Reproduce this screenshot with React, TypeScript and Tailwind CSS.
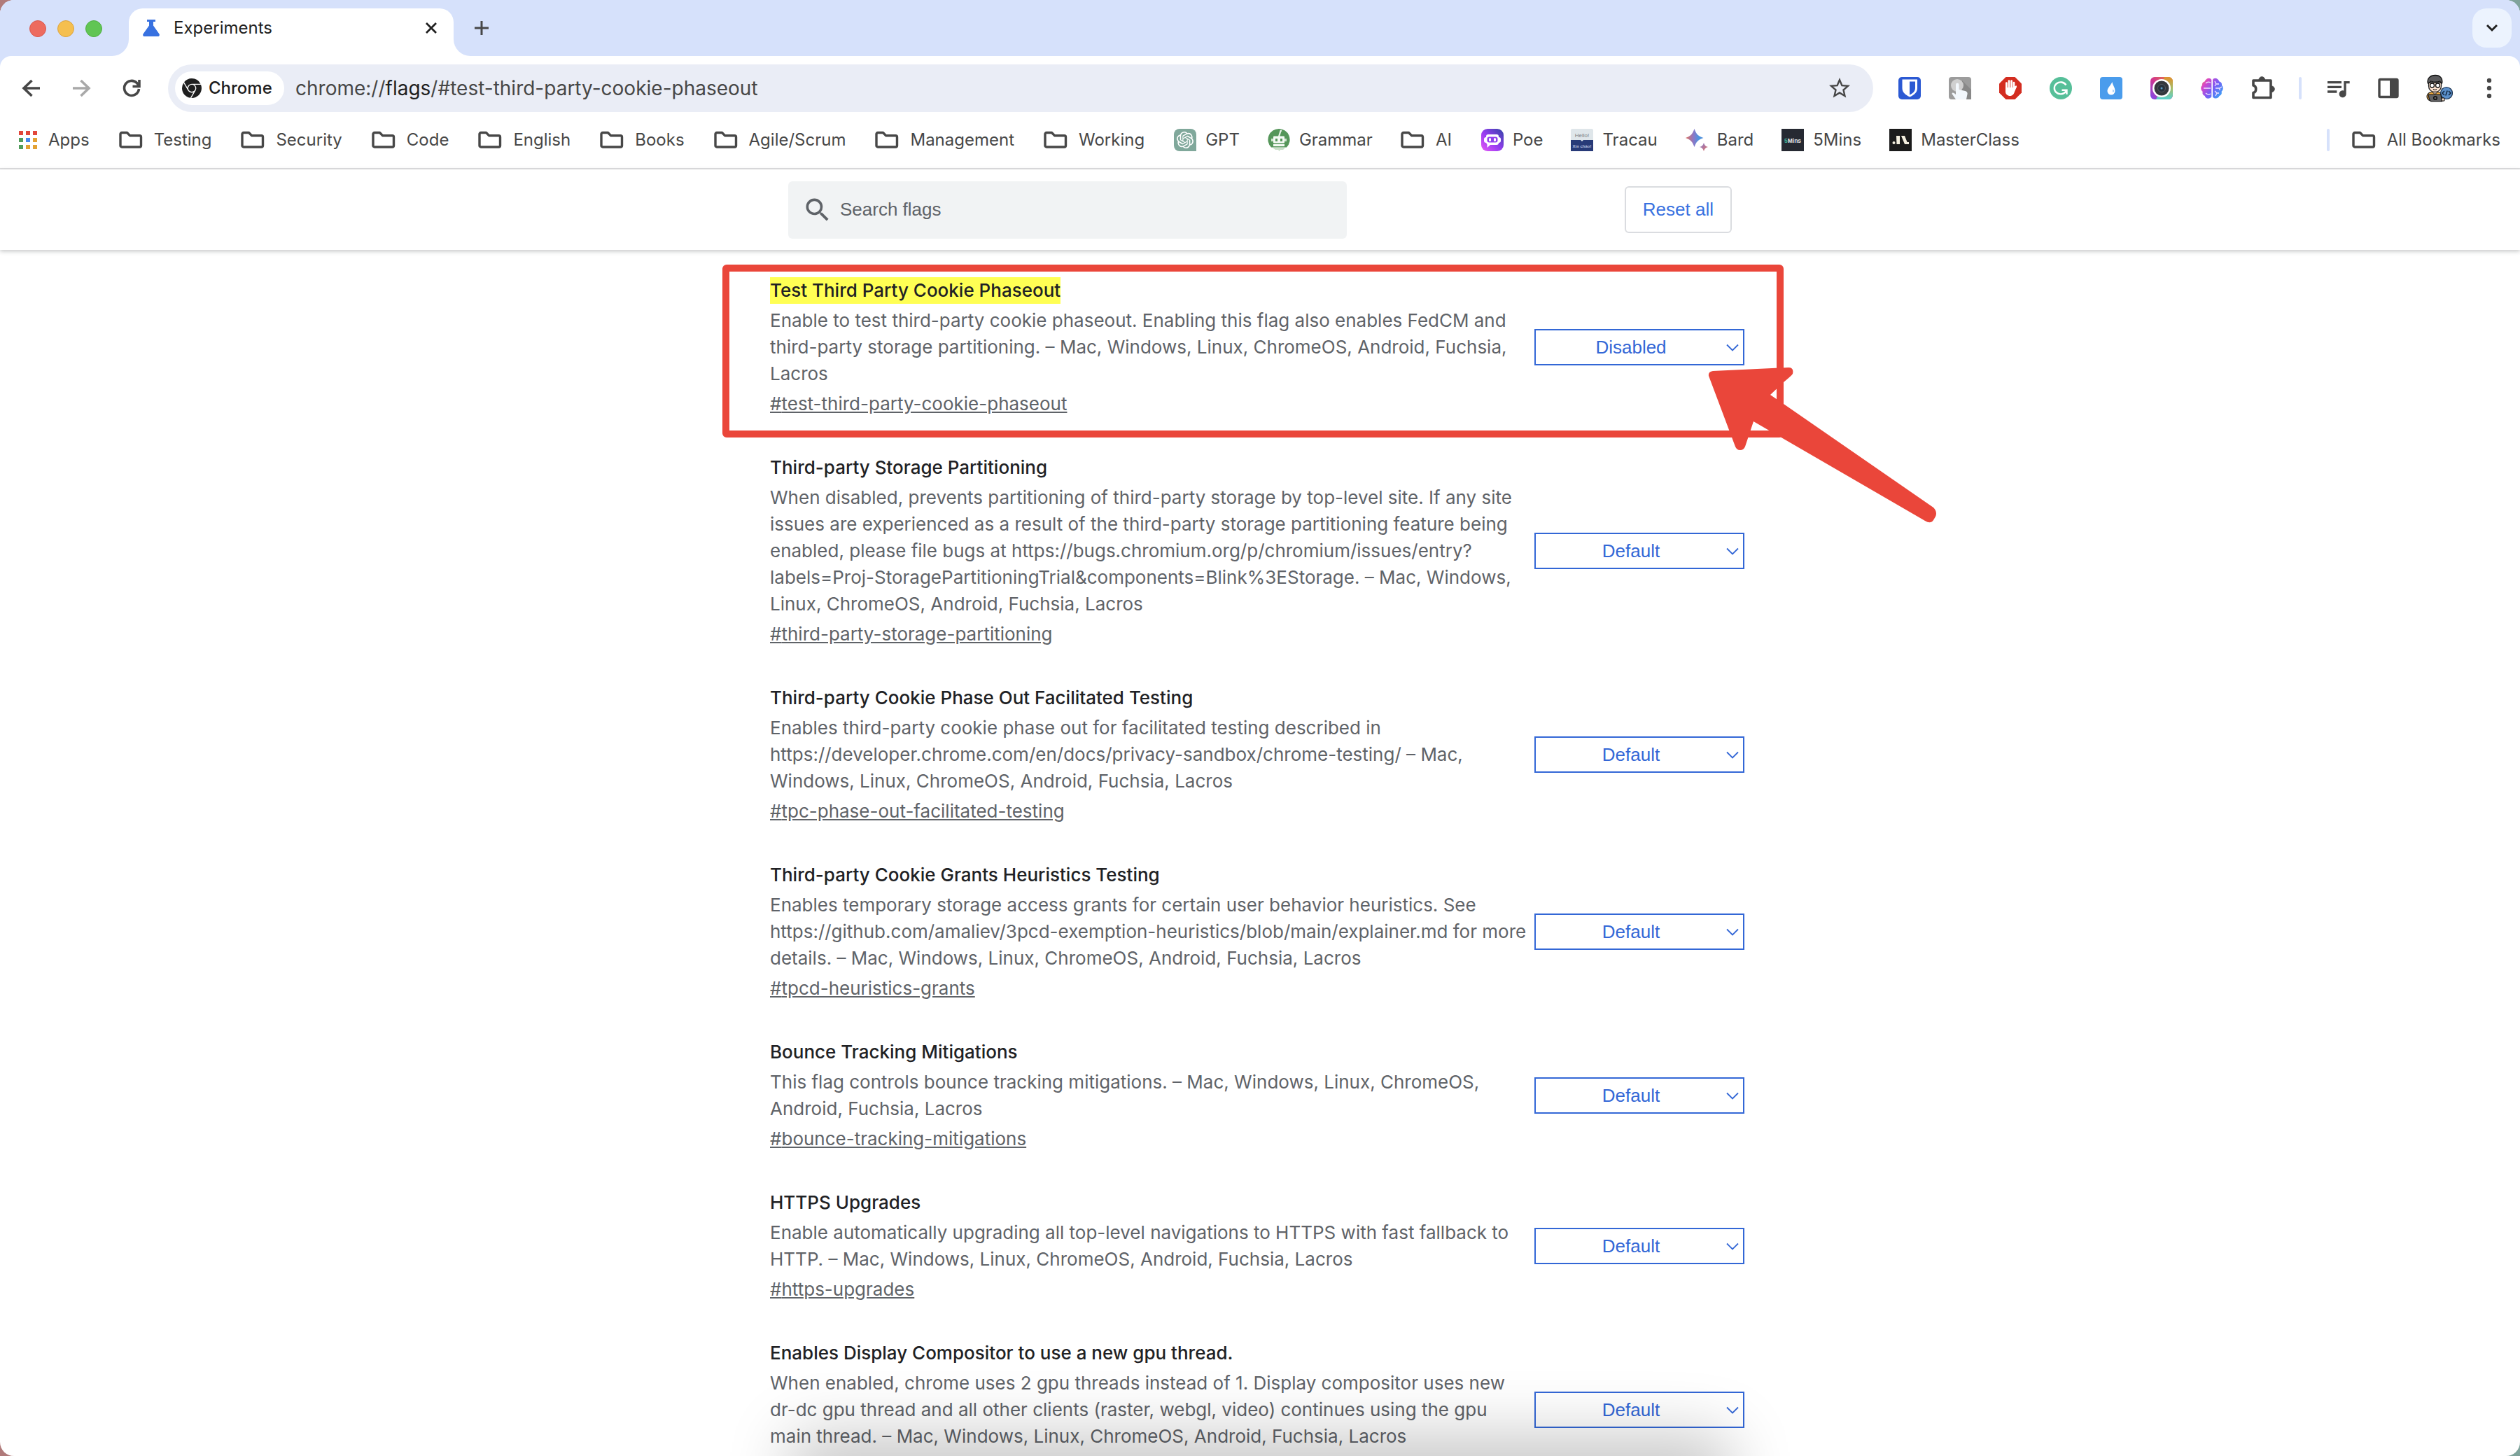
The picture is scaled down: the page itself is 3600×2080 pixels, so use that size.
import React from "react";
import { MdQueueMusic, MdStarBorder, MdSearch } from "react-icons/md";
import { SiGooglechrome, SiOpenai } from "react-icons/si";

type Flag = { id: string; title: string; text: string; value: string; highlighted?: boolean };

const flags: Flag[] = [
  {
    id: "test-third-party-cookie-phaseout",
    title: "Test Third Party Cookie Phaseout",
    text: "Enable to test third-party cookie phaseout. Enabling this flag also enables FedCM and third-party storage partitioning. – Mac, Windows, Linux, ChromeOS, Android, Fuchsia, Lacros",
    value: "Disabled",
    highlighted: true,
  },
  {
    id: "third-party-storage-partitioning",
    title: "Third-party Storage Partitioning",
    text: "When disabled, prevents partitioning of third-party storage by top-level site. If any site issues are experienced as a result of the third-party storage partitioning feature being enabled, please file bugs at https://bugs.chromium.org/p/chromium/issues/entry?labels=Proj-StoragePartitioningTrial&components=Blink%3EStorage. – Mac, Windows, Linux, ChromeOS, Android, Fuchsia, Lacros",
    value: "Default",
  },
  {
    id: "tpc-phase-out-facilitated-testing",
    title: "Third-party Cookie Phase Out Facilitated Testing",
    text: "Enables third-party cookie phase out for facilitated testing described in https://developer.chrome.com/en/docs/privacy-sandbox/chrome-testing/ – Mac, Windows, Linux, ChromeOS, Android, Fuchsia, Lacros",
    value: "Default",
  },
  {
    id: "tpcd-heuristics-grants",
    title: "Third-party Cookie Grants Heuristics Testing",
    text: "Enables temporary storage access grants for certain user behavior heuristics. See https://github.com/amaliev/3pcd-exemption-heuristics/blob/main/explainer.md for more details. – Mac, Windows, Linux, ChromeOS, Android, Fuchsia, Lacros",
    value: "Default",
  },
  {
    id: "bounce-tracking-mitigations",
    title: "Bounce Tracking Mitigations",
    text: "This flag controls bounce tracking mitigations. – Mac, Windows, Linux, ChromeOS, Android, Fuchsia, Lacros",
    value: "Default",
  },
  {
    id: "https-upgrades",
    title: "HTTPS Upgrades",
    text: "Enable automatically upgrading all top-level navigations to HTTPS with fast fallback to HTTP. – Mac, Windows, Linux, ChromeOS, Android, Fuchsia, Lacros",
    value: "Default",
  },
  {
    id: "enable-drdc",
    title: "Enables Display Compositor to use a new gpu thread.",
    text: "When enabled, chrome uses 2 gpu threads instead of 1. Display compositor uses new dr-dc gpu thread and all other clients (raster, webgl, video) continues using the gpu main thread. – Mac, Windows, Linux, ChromeOS, Android, Fuchsia, Lacros",
    value: "Default",
  },
];

function FolderIcon() {
  return (
    <svg className="h-8 w-[34px]" viewBox="0 0 34 32" fill="none" stroke="#474747" strokeWidth="3.4" strokeLinejoin="round" aria-hidden="true">
      <path d="M2 7.500a2 2 0 0 1 2-2h7.500l4 4.200H29.500a2 2 0 0 1 2 2V24a2 2 0 0 1-2 2H4a2 2 0 0 1-2-2Z" />
    </svg>
  );
}

function AppsIcon() {
  const colors = ["#e2473b", "#e2473b", "#e2473b", "#529d5c", "#4789ee", "#e3a234", "#529d5c", "#e3a234", "#e3a234"];
  return (
    <svg className="h-[26px] w-[26px]" viewBox="0 0 26 26" aria-hidden="true">
      {colors.map((c, i) => (
        <rect key={i} x={(i % 3) * 10} y={Math.floor(i / 3) * 10} width="6" height="6" fill={c} />
      ))}
    </svg>
  );
}

function GptIcon() {
  return (
    <span className="flex size-8 items-center justify-center rounded-lg rounded-br-none bg-[#80a89b] text-2xl text-white">
      <SiOpenai />
    </span>
  );
}

function GrammarIcon() {
  return (
    <svg className="size-8" viewBox="0 0 32 32" aria-hidden="true">
      <path d="M16 0a15.500 15.500 0 0 1 11 26.500L5 26.500A15.500 15.500 0 0 1 16 0Z" fill="#55965a" />
      <path d="M16 11 18.500 3l1.500-.6" stroke="#e9f3e9" strokeWidth="2.200" fill="none" />
      <rect x="8" y="10.500" width="16" height="10" rx="1" fill="#f4f9f4" />
      <rect x="5" y="14" width="22" height="4" fill="#cfe3cf" />
      <rect x="8" y="14" width="16" height="4" fill="#f4f9f4" />
      <rect x="8" y="22" width="16" height="3" fill="#f4f9f4" />
      <rect x="11" y="14" width="3" height="4" fill="#55965a" />
      <rect x="18" y="14" width="3" height="4" fill="#55965a" />
      <path d="M7 27h18l-3 3h-4l-1.500 2-1.500-2h-4Z" fill="#c9dfc9" />
    </svg>
  );
}

function PoeIcon() {
  return (
    <svg className="size-8" viewBox="0 0 32 32" aria-hidden="true">
      <defs>
        <linearGradient id="poe" x1="0" y1="1" x2="1" y2="0">
          <stop offset="0" stopColor="#e659f5" />
          <stop offset=".45" stopColor="#9a3df2" />
          <stop offset="1" stopColor="#3344a8" />
        </linearGradient>
      </defs>
      <rect width="32" height="32" rx="9" fill="url(#poe)" />
      <rect x="4" y="12" width="24" height="8" rx="3" fill="#fff" />
      <path d="M10 8h12a3 3 0 0 1 3 3v9a3 3 0 0 1-3 3H13l-4.500 4v-4.500L7 20v-9a3 3 0 0 1 3-3Z" fill="#fff" />
      <rect x="8.500" y="11.500" width="15" height="8" rx="3" fill="#9140ee" />
      <rect x="11" y="13" width="3" height="5" rx="1.500" fill="#fff" />
      <rect x="18" y="13" width="3" height="5" rx="1.500" fill="#fff" />
    </svg>
  );
}

function TracauIcon() {
  return (
    <svg className="size-8" viewBox="0 0 32 32" aria-hidden="true">
      <rect width="32" height="32" rx="2" fill="#dfe6ea" />
      <path d="M0 16h14l2 2 2-2h14v16H0Z" fill="#273a78" />
      <text x="16" y="12" textAnchor="middle" fontFamily="Liberation Sans" fontSize="8" fill="#7b8288">Hello!</text>
      <text x="16" y="27" textAnchor="middle" fontFamily="Liberation Sans" fontWeight="700" fontSize="6" fill="#b8c2e0">Xin chào!</text>
    </svg>
  );
}

function BardIcon() {
  return (
    <svg className="size-8" viewBox="0 0 32 32" aria-hidden="true">
      <defs>
        <linearGradient id="bard" x1="0" y1=".5" x2="1" y2=".5">
          <stop offset="0" stopColor="#e0705c" />
          <stop offset=".45" stopColor="#8a78c8" />
          <stop offset=".75" stopColor="#4a95e0" />
          <stop offset="1" stopColor="#5a8fd8" />
        </linearGradient>
        <linearGradient id="bard-small" x1="0" y1="0" x2="1" y2="1">
          <stop offset="0" stopColor="#7d7bd6" />
          <stop offset="1" stopColor="#e8705c" />
        </linearGradient>
      </defs>
      <path d="M12.500 0c2.500 7.500 5.500 10.500 13 13-7.500 2.500-10.500 5.500-13 13-2.500-7.500-5.500-10.500-12.500-13 7-2.500 10-5.500 12.500-13Z" fill="url(#bard)" />
      <path d="M26 20c1 3.500 2.500 5 6 6-3.500 1-5 2.500-6 6-1-3.500-2.500-5-6-6 3.500-1 5-2.500 6-6Z" fill="url(#bard-small)" />
    </svg>
  );
}

function MinsIcon() {
  return (
    <svg className="size-8" viewBox="0 0 32 32" aria-hidden="true">
      <rect width="32" height="32" fill="#262932" />
      <text x="4" y="19.500" fontFamily="Liberation Sans" fontWeight="700" fontSize="8.500" fill="#e8e8ea">
        <tspan fill="#3fb39b">5</tspan>Mins
      </text>
    </svg>
  );
}

function MasterClassIcon() {
  return (
    <svg className="size-8" viewBox="0 0 32 32" aria-hidden="true">
      <rect width="32" height="32" fill="#1b1b1b" />
      <path d="M10 10h5v12h-4.500Zm7 0h5l3.500 9H28v3h-6Z" fill="#f4efdf" />
      <circle cx="6.500" cy="20" r="2" fill="#f4efdf" />
    </svg>
  );
}

const bookmarks: { label: string; icon?: React.ReactNode }[] = [
  { label: "Testing" },
  { label: "Security" },
  { label: "Code" },
  { label: "English" },
  { label: "Books" },
  { label: "Agile/Scrum" },
  { label: "Management" },
  { label: "Working" },
  { label: "GPT", icon: <GptIcon /> },
  { label: "Grammar", icon: <GrammarIcon /> },
  { label: "AI" },
  { label: "Poe", icon: <PoeIcon /> },
  { label: "Tracau", icon: <TracauIcon /> },
  { label: "Bard", icon: <BardIcon /> },
  { label: "5Mins", icon: <MinsIcon /> },
  { label: "MasterClass", icon: <MasterClassIcon /> },
];

const extensions: { name: string; art: React.ReactNode }[] = [
  {
    name: "Password vault",
    art: (
      <>
        <rect width="32" height="32" rx="5" fill="#2b59d3" />
        <path d="M5.500 3.500h21.500V16c0 6-5 10-10.700 12.500C10.500 26 5.500 22 5.500 16Z" fill="#fff" />
        <path d="M16 6.500h8V16c0 4.500-3.500 7.500-8 9.500Z" fill="#2b59d3" />
      </>
    ),
  },
  {
    name: "Tap",
    art: (
      <>
        <rect width="32" height="32" rx="4" fill="#9c9c9c" />
        <path d="m19 5 13 13v14H18Z" fill="#888" />
        <circle cx="12" cy="12" r="9" fill="#d0d0d0" />
        <path d="M10 11a2 2 0 0 1 4.500 0v7l9 2c2 .5 3.500 2 3 4.500L25 32H10L4.500 24c0-1.800 1.500-2 3-1l2.500 2Z" fill="#f3f8fd" />
      </>
    ),
  },
  {
    name: "Ad blocker",
    art: (
      <>
        <path d="M9.500 0h13L32 9.500v13L22.500 32h-13L0 22.500v-13Z" fill="#d32d20" />
        <path d="M9 15h12l4-3-3 9c-1 3.500-3 6-6.500 6S9 24.500 9 21Z" fill="#fff" />
        <path d="M10.400 18V8.500M14 16V5.500M17.600 16V5.500M21 18V8M20.500 20.500l3.200-6.500" stroke="#fff" strokeWidth="2.700" strokeLinecap="round" />
      </>
    ),
  },
  {
    name: "Grammar checker",
    art: (
      <>
        <circle cx="16" cy="16" r="16" fill="#56bf99" />
        <path d="M23.500 11.500A9 8.500 0 1 0 23 21l.500-1.500M17.500 18.800h7v6" fill="none" stroke="#fff" strokeWidth="2.400" />
      </>
    ),
  },
  {
    name: "Color drop",
    art: (
      <>
        <rect width="32" height="32" rx="4" fill="#4a9cec" />
        <path d="M17.500 7c.5 5 4 7.500 4 13a5.500 5.500 0 0 1-11 0c0-4 4.500-7.500 7-13Z" fill="#fff" />
        <path d="M18.500 17.500c1.500 1.500 1.500 3.500 0 4.500Z" fill="#4a9cec" />
      </>
    ),
  },
  {
    name: "Screen capture",
    art: (
      <>
        <defs>
          <linearGradient id="cam" x1="0" y1="1" x2="1" y2="0">
            <stop offset="0" stopColor="#7a4cf0" />
            <stop offset=".5" stopColor="#d0358f" />
            <stop offset="1" stopColor="#f08c2a" />
          </linearGradient>
          <linearGradient id="cam-side" x1="0" y1="0" x2="0" y2="1">
            <stop offset="0" stopColor="#e0902c" />
            <stop offset=".5" stopColor="#a6bd6a" />
            <stop offset="1" stopColor="#58d3d0" />
          </linearGradient>
        </defs>
        <rect width="32" height="32" rx="6" fill="url(#cam)" />
        <path d="M20 0h6a6 6 0 0 1 6 6v20a6 6 0 0 1-6 6H8l8-16Z" fill="url(#cam-side)" />
        <circle cx="16" cy="16" r="13" fill="#fff" />
        <circle cx="16" cy="16" r="10.500" fill="#34383d" />
        <circle cx="16" cy="16" r="5.500" fill="#27323c" stroke="#555b61" />
        <circle cx="16" cy="16" r="1.500" fill="#5b9bc4" />
      </>
    ),
  },
  {
    name: "Brain",
    art: (
      <>
        <defs>
          <linearGradient id="brain" x1="0" y1="0" x2="1" y2=".7">
            <stop offset="0" stopColor="#f29a3c" />
            <stop offset=".25" stopColor="#d946c8" />
            <stop offset=".6" stopColor="#7a5cf5" />
            <stop offset="1" stopColor="#3f9cf5" />
          </linearGradient>
        </defs>
        <path d="M15.300 4v24c-2 4-9 3.500-9.500-1-3-1-4-3.500-3-6C-.5 18.500-.5 14 2 12c-.5-3 1-5 3.500-5.500C7.500 1 13.500.500 15.300 4ZM17 4v24c2 4 8.500 3 9.500-1 3-1 4-3.500 3-6 3-2.500 3-7 .5-9 .5-3-1-5-3.500-5.500C24.500 1 18.500.500 17 4Z" fill="url(#brain)" />
        <path d="M4 16h10M7 9q3-3 7-1M7 23q3 3 7 1M20 6l2 4h4M22 10l-2 3M21 16h6l3-2M27 16v3M20 20l3 3h3M23 23l-2 4" stroke="#f3e4ff" strokeWidth="1.300" fill="none" />
      </>
    ),
  },
];

function AvatarIcon() {
  return (
    <svg className="size-10" viewBox="0 0 40 40" aria-hidden="true">
      <path d="M3 31c1-5 5-6 11-6s11 1 12 6l1 7H8c-3-1-5-4-5-7Z" fill="#f0a83c" stroke="#222" strokeWidth="1.200" />
      <path d="M11 22h7v4l-3.500 2.500L11 26Z" fill="#fbdcc4" stroke="#222" />
      <path d="M5.500 12h18v5c0 5-4 8.500-9 8.500s-9-3.500-9-8.500Z" fill="#fde3cf" stroke="#1d1d1d" strokeWidth="1.300" />
      <path d="M4.500 13C2.500 6 8 1.500 15 1.500S26 6 24.500 13c-1.500-.5-2.500-1.500-3-3-4 1.500-10 1-13 0-.5 1.500-2 2.500-4 3Z" fill="#5b5b5d" stroke="#111" strokeWidth="1.300" />
      <circle cx="10.500" cy="16" r="3" fill="#fff" stroke="#111" strokeWidth="1.300" />
      <circle cx="18.500" cy="16" r="3" fill="#fff" stroke="#111" strokeWidth="1.300" />
      <path d="M12 21.500q2.500 2 5 0" fill="none" stroke="#111" strokeWidth="1.200" />
      <circle cx="31" cy="27" r="8.500" fill="#5b8fc9" stroke="#1c3350" strokeWidth="1.200" />
      <path d="m28 24-3 3 3 3M34 24l3 3-3 3M32.200 23.500l-2.400 7" fill="none" stroke="#10243c" strokeWidth="1.500" />
      <path d="M5 29h18l1.500 10H9c-2-1-3-3-4-10Z" fill="#636365" stroke="#111" strokeWidth="1.200" />
      <circle cx="15" cy="34" r="2.300" fill="none" stroke="#111" strokeWidth="1.600" />
      <path d="M24 34h4v4h-4Z" fill="#fde3cf" stroke="#111" />
    </svg>
  );
}

function TabStrip() {
  return (
    <div className="flex h-20 items-start bg-[#d6e1fb]">
      <div className="flex w-40 items-center gap-4 pt-[29px] pl-[42px]">
        <button aria-label="Close window" className="size-6 rounded-full border border-[#d9584d] bg-[#ed6b5f]" />
        <button aria-label="Minimize window" className="size-6 rounded-full border border-[#dba33f] bg-[#f5bf4f]" />
        <button aria-label="Zoom window" className="size-6 rounded-full border border-[#4faf41] bg-[#61c554]" />
      </div>
      <div className="flex pt-3">
        <span className="h-[68px] w-6 bg-white">
          <span className="block h-full rounded-br-3xl bg-[#d6e1fb]" />
        </span>
        <div className="flex h-[68px] w-[464px] items-start rounded-t-[20px] bg-white pt-3 pr-5 pl-5">
          <div className="flex h-8 flex-1 items-center">
            <svg className="size-6" viewBox="0 0 24 24" fill="#3871e0" aria-hidden="true">
              <path d="M6 0h12v3h-3v5.500l8.500 12c1 2-.2 3.500-2 3.500h-19C.7 24-.5 22.500.500 20.500L9 8.500V3H6Z" />
            </svg>
            <span className="flex-1 pl-5 text-2xl text-[#1f1f1f]">Experiments</span>
            <button aria-label="Close tab" className="flex size-6 items-center justify-center">
              <svg className="size-4" viewBox="0 0 16 16" stroke="#1f1f1f" strokeWidth="2.800" aria-hidden="true">
                <path d="m1 1 14 14M15 1 1 15" />
              </svg>
            </button>
          </div>
        </div>
        <span className="h-[68px] w-6 bg-white">
          <span className="block h-full rounded-bl-3xl bg-[#d6e1fb]" />
        </span>
      </div>
      <button aria-label="New tab" className="mt-6 flex size-8 items-center justify-center">
        <svg className="size-5" viewBox="0 0 20 20" stroke="#474747" strokeWidth="3" aria-hidden="true">
          <path d="M10 0v20M0 10h20" />
        </svg>
      </button>
      <button aria-label="Search tabs" className="mt-3 mr-3 ml-auto flex size-14 items-center justify-center rounded-[20px] bg-[#ecf3fe]">
        <svg className="h-3 w-4" viewBox="0 0 16 12" fill="none" stroke="#1f1f1f" strokeWidth="3" aria-hidden="true">
          <path d="m1 2 7 7 7-7" />
        </svg>
      </button>
    </div>
  );
}

function Toolbar() {
  return (
    <div className="flex h-[92px] items-center px-7">
      <div className="flex w-[212px] items-center gap-10">
        <button aria-label="Back">
          <svg className="size-8" viewBox="0 0 32 32" fill="none" stroke="#474747" strokeWidth="3.600" aria-hidden="true">
            <path d="M29 16H6M17.500 5 6 16l11.500 11" />
          </svg>
        </button>
        <button aria-label="Forward">
          <svg className="size-8" viewBox="0 0 32 32" fill="none" stroke="#a9a9a9" strokeWidth="3.600" aria-hidden="true">
            <path d="M4 16h23M15.500 5 27 16 15.500 27" />
          </svg>
        </button>
        <button aria-label="Reload">
          <svg className="size-8" viewBox="0 0 32 32" fill="none" stroke="#474747" strokeWidth="3.600" aria-hidden="true">
            <path d="M26.500 17A10.500 10.500 0 1 1 23.500 8.500L26 12" />
            <path d="M27 4v9.500H17.500" />
          </svg>
        </button>
      </div>
      <div className="flex h-[68px] flex-1 items-center rounded-full bg-[#eaedf6] pr-[30px] pl-[10px]">
        <button className="flex h-12 w-[156px] items-center gap-[10px] rounded-full bg-white pl-[10px] text-2xl font-medium text-[#1f1f1f]">
          <SiGooglechrome className="size-7" />
          Chrome
        </button>
        <div role="textbox" aria-label="Address" className="flex-1 pl-4 text-[28px] leading-9 text-[#474747]">
          chrome://<span className="text-[#1f1f1f]">flags</span>/#test-third-party-cookie-phaseout
        </div>
        <button aria-label="Bookmark this page">
          <MdStarBorder className="size-9 text-[#474747]" />
        </button>
      </div>
      <div className="flex items-center gap-10 pl-9">
        {extensions.map((e) => (
          <button key={e.name} aria-label={e.name}>
            <svg className="size-8" viewBox="0 0 32 32" aria-hidden="true">
              {e.art}
            </svg>
          </button>
        ))}
        <button aria-label="Extensions">
          <svg className="h-9 w-9" viewBox="0 0 36 36" aria-hidden="true">
            <path d="M3 7h25v24.500H3v-7c5-1 5-9.500 0-10.500Z" fill="none" stroke="#474747" strokeWidth="3.600" strokeLinejoin="round" />
            <path d="M11 6a4.300 4.300 0 0 1 8.600 0ZM29 15a4.300 4.300 0 0 1 0 8.600Z" fill="#474747" stroke="#474747" />
          </svg>
        </button>
      </div>
      <span className="mx-8 h-8 w-1 rounded-full bg-[#d6e1fb]" />
      <div className="flex items-center gap-9">
        <button aria-label="Media controls">
          <MdQueueMusic className="size-10 text-[#474747]" />
        </button>
        <button aria-label="Side panel">
          <svg className="size-8" viewBox="0 0 32 32" aria-hidden="true">
            <rect x="3" y="3.500" width="26" height="25" rx="1.500" fill="none" stroke="#474747" strokeWidth="3.400" />
            <path d="M18 3h10v26H18Z" fill="#474747" />
          </svg>
        </button>
        <button aria-label="Profile">
          <AvatarIcon />
        </button>
        <button aria-label="Menu">
          <svg className="size-8" viewBox="0 0 32 32" fill="#474747" aria-hidden="true">
            <circle cx="16" cy="5" r="3.200" />
            <circle cx="16" cy="16" r="3.200" />
            <circle cx="16" cy="27" r="3.200" />
          </svg>
        </button>
      </div>
    </div>
  );
}

function BookmarksBar() {
  return (
    <nav aria-label="Bookmarks" className="flex h-[70px] items-start border-b-2 border-[#dfdfe1] pt-2 pr-7 pl-[27px] text-2xl leading-10 text-[#474747]">
      <a href="#apps" className="mr-[42px] flex h-10 items-center gap-4">
        <AppsIcon />
        Apps
      </a>
      {bookmarks.map((b) =>
        b.icon ? (
          <a key={b.label} href={"#" + b.label} className="mr-10 flex h-10 items-center gap-[13px]">
            {b.icon}
            {b.label}
          </a>
        ) : (
          <a key={b.label} href={"#" + b.label} className="mr-[42px] flex h-10 items-center gap-4">
            <FolderIcon />
            {b.label}
          </a>
        ),
      )}
      <span className="mt-1 mr-8 ml-auto h-8 w-1 rounded-full bg-[#d6e1fb]" />
      <a href="#all" className="flex h-10 items-center gap-4">
        <FolderIcon />
        All Bookmarks
      </a>
    </nav>
  );
}

function FlagRow({ flag }: { flag: Flag }) {
  return (
    <section className="relative flex items-center gap-2 pb-[53px]">
      {flag.highlighted && (
        <>
          <div className="pointer-events-none absolute -top-[18px] -right-14 bottom-6 -left-[68px] rounded-md border-[10px] border-[#ea463a]" />
          <svg className="pointer-events-none absolute top-[126px] -right-[276px] z-10 h-[228px] w-[328px]" viewBox="0 0 328 228" fill="#ea463a" aria-hidden="true">
            <path d="M1 15Q0 9 7 8L115 3Q123 3 121 12Q119 15 108 24L89 42L322 203Q328 209 325 216L322 221Q318 227 310 222L65 80L53 116Q51 121 46 121Q41 121 39 116Z" />
          </svg>
        </>
      )}
      <div className="flex flex-1 flex-col gap-[5px] text-[26px] leading-[38px] text-[#5f6368]">
        <h2 className="font-medium text-[#202124]">
          <span className={flag.highlighted ? "inline-block bg-[#ffff54]" : ""}>{flag.title}</span>
        </h2>
        <p className="break-words">{flag.text}</p>
        <a href={"#" + flag.id} className="self-start underline">
          #{flag.id}
        </a>
      </div>
      <div className="relative w-[300px]">
        <select
          aria-label={flag.title}
          defaultValue={flag.value}
          className="h-[52px] w-full appearance-none border-2 border-[#3367d6] bg-transparent pr-6 text-center font-['Liberation_Sans',sans-serif] text-[26px] text-[#3367d6] [text-align-last:center]"
        >
          <option>Default</option>
          <option>Enabled</option>
          <option>Disabled</option>
        </select>
        <svg className="pointer-events-none absolute top-[21px] right-2 h-[11px] w-[18px]" viewBox="0 0 18 11" fill="none" stroke="#3367d6" strokeWidth="1.800" aria-hidden="true">
          <path d="m1 1.500 8 8 8-8" />
        </svg>
      </div>
    </section>
  );
}

export default function App() {
  return (
    <div className="h-screen overflow-hidden bg-linear-to-r from-[#b07a7a] to-[#7fa39b] font-[Inter,sans-serif]">
      <div className="relative flex h-full flex-col overflow-hidden rounded-[20px] bg-white">
        <div className="bg-[#d6e1fb]">
          <TabStrip />
          <div className="rounded-t-2xl bg-white">
            <Toolbar />
            <BookmarksBar />
          </div>
        </div>
        <header className="relative z-10 h-[115px] shrink-0 bg-white shadow-[0_2px_6px_rgba(60,64,67,0.3)]">
          <div className="mx-auto flex h-full w-[1348px] max-w-full items-center justify-between">
            <div className="flex h-[82px] w-[798px] items-center gap-[10px] rounded-md bg-[#f1f3f4] pl-5">
              <MdSearch className="size-11 text-[#5f6368]" />
              <input
                type="search"
                aria-label="Search flags"
                placeholder="Search flags"
                className="flex-1 bg-transparent font-['Liberation_Sans',sans-serif] text-[26px] outline-none placeholder:text-[#5f6368] placeholder:opacity-100"
              />
            </div>
            <button className="h-[67px] rounded-md border-2 border-[#dadce0] px-6 font-['Liberation_Sans',sans-serif] text-[26px] text-[#3871e0]">
              Reset all
            </button>
          </div>
        </header>
        <main className="mx-auto w-[1440px] max-w-full flex-1 pt-[39px] pr-7 pl-5">
          {flags.map((f) => (
            <FlagRow key={f.id} flag={f} />
          ))}
        </main>
        <div className="pointer-events-none absolute inset-x-[30%] -bottom-16 z-10 flex h-16 justify-center px-20">
          <div className="h-full w-full shadow-[0_0_90px_30px_rgba(0,0,0,0.22)]" />
        </div>
      </div>
    </div>
  );
}
